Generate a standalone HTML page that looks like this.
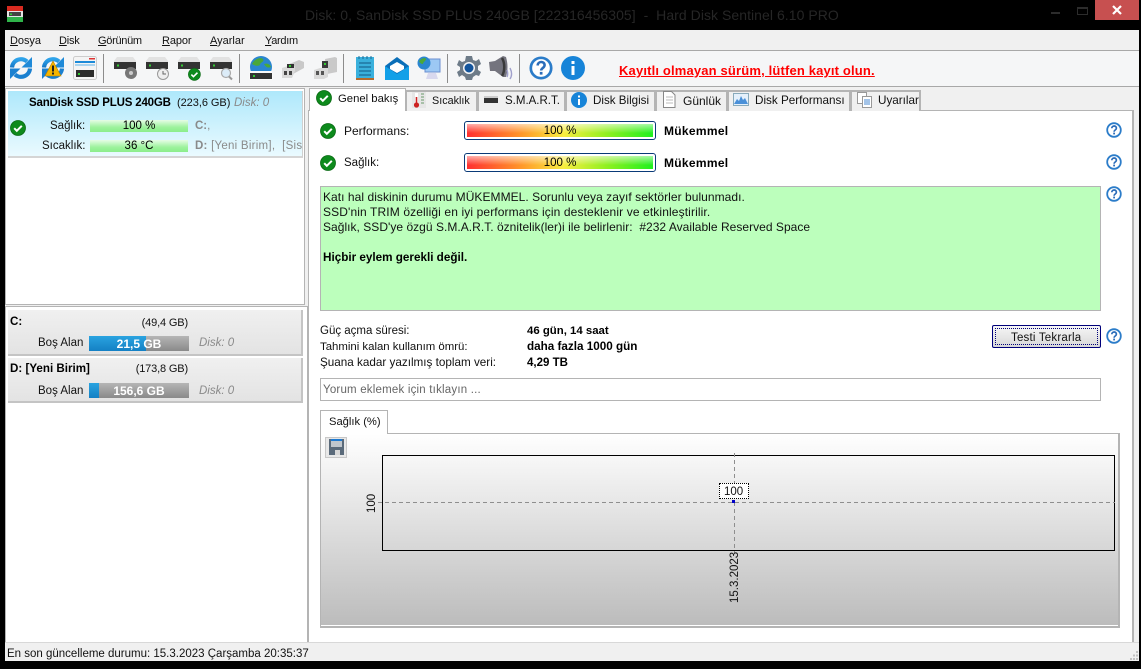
<!DOCTYPE html>
<html><head><meta charset="utf-8"><style>
html,body{margin:0;padding:0;background:#000;}
#p{position:relative;width:1141px;height:669px;overflow:hidden;background:#000;font:11.5px/14px "Liberation Sans",sans-serif;color:#111}
#p div,#p span,#p svg{position:absolute}
.t{white-space:nowrap}
.b{font-weight:bold;color:#000;font-size:11.6px}
.g{color:#8a8a8a}
.r{text-align:right}
.tab{background:#f0f0f0;border:2px solid #b4b4b4;border-bottom:0;box-sizing:border-box;top:90px;height:21px}
.sep{width:1px;height:29px;top:54px;background:#8c8c8c}
.bar{height:12px;background:linear-gradient(#e6fde6,#9df29d 60%,#8bee8b);text-align:center;line-height:12px;left:90px;width:98px;color:#000}
.card{left:8px;width:295px;background:linear-gradient(#f0f0f0,#e3e3e3);border-right:2px solid #c4c4c4;border-bottom:2px solid #c4c4c4;box-sizing:border-box}
.free{left:89px;width:100px;height:15px;background:linear-gradient(#b5b5b5,#8a8a8a);color:#fff;font-weight:bold;text-align:center;line-height:16px;font-size:12px}
.prog{left:464px;width:192px;height:19px;border:1px solid #0a3a78;border-radius:3px;box-sizing:border-box;background:#fff}
.fill{left:2px;right:2px;top:2px;bottom:2px;background:linear-gradient(rgba(255,255,255,.6),rgba(255,255,255,0) 70%),linear-gradient(90deg,#ff3030,#ff9a2a 30%,#f8ee40 52%,#90f020 75%,#20f020);text-align:center;line-height:15px;color:#000}
.n{font-size:11px;letter-spacing:-.3px}
</style></head><body><div id="p">

<svg width="0" height="0" style="left:0;top:0"><defs>
<linearGradient id="bl" x1="0" y1="0" x2="0" y2="1"><stop offset="0" stop-color="#2ea3ea"/><stop offset="1" stop-color="#1576c6"/></linearGradient>
<g id="ok"><circle cx="8" cy="8" r="7.5" fill="#0d8a1c" stroke="#0a6a14" stroke-width=".8"/><path d="M4.2 8.200l2.600 2.600 5-5" fill="none" stroke="#fff" stroke-width="2"/></g>
<g id="help"><circle cx="8" cy="8" r="6.800" fill="#fff" stroke="#2b7cc9" stroke-width="1.800"/><path d="M5.800 6.300c0-3 4.600-3 4.600-.2 0 1.900-2.300 1.900-2.300 3.600" fill="none" stroke="#2b6cb9" stroke-width="1.700"/><rect x="7.200" y="10.600" width="1.800" height="1.800" fill="#2b6cb9"/></g>
<g id="sync"><path d="M3 11.500A9 9 0 0 1 18 5.500" fill="none" stroke="url(#bl)" stroke-width="4.200"/><path d="M23 1v10.500H12.500z" fill="#1f8ad8"/><path d="M21 12.500A9 9 0 0 1 6 18.500" fill="none" stroke="#1a80d0" stroke-width="4.200"/><path d="M1 23V12.500H11.500z" fill="#1a80d0"/></g>
<g id="hdd"><path d="M3 0h16l3 4v8H0V4z" fill="#e2e2e2"/><rect x="0" y="5" width="22" height="7" fill="#333"/><rect x="3" y="7.500" width="2" height="2" fill="#3c3"/></g>
</defs></svg>

<!-- title bar -->
<svg style="left:7px;top:6px" width="16" height="16"><rect width="16" height="6" fill="#d92a20"/><rect y="10" width="16" height="6" fill="#2fb34a"/><rect y="5" width="16" height="6" fill="#e4e4e4"/><rect x="2" y="6" width="12" height="4" fill="#444"/><rect x="3" y="7.500" width="2" height="1.500" fill="#3c3"/></svg>
<span class="t" style="left:305px;top:6px;font-size:14px;line-height:18px;color:#262626;letter-spacing:.05px">Disk: 0, SanDisk SSD PLUS 240GB [222316456305]&nbsp; -&nbsp; Hard Disk Sentinel 6.10 PRO</span>
<div style="left:1051px;top:12px;width:9px;height:2px;background:#2c2c2c"></div>
<div style="left:1077px;top:7px;width:9px;height:5px;border:1px solid #2c2c2c;border-top-width:2px"></div>
<div style="left:1095px;top:0;width:44px;height:20px;background:#c75050"></div>
<svg style="left:1111px;top:5px" width="12" height="10"><path d="M2 1l8 8M10 1l-8 8" stroke="#fff" stroke-width="2.200"/></svg>

<!-- window -->
<div style="left:5px;top:30px;width:1134px;height:631px;background:#fff"></div>
<div style="left:5px;top:30px;width:1134px;height:20px;background:#f0f0f0"></div>
<div style="left:5px;top:50px;width:1134px;height:1px;background:#a8a8a8"></div>
<div style="left:5px;top:51px;width:1134px;height:35px;background:#f5f6f7"></div>
<div style="left:5px;top:86px;width:1134px;height:1px;background:#a8a8a8"></div>
<div style="left:5px;top:87px;width:1134px;height:555px;background:#f0f0f0"></div>
<div style="left:5px;top:642px;width:1134px;height:1px;background:#d8d8d8"></div>
<div style="left:5px;top:643px;width:1134px;height:18px;background:#f0f0f0"></div>

<!-- menu -->
<span class="t" style="left:10px;top:34px;font-size:11px;letter-spacing:-.05px"><u>D</u>osya</span>
<span class="t" style="left:59px;top:34px;font-size:11px;letter-spacing:-.2px"><u>D</u>isk</span>
<span class="t" style="left:98px;top:34px;font-size:11px;letter-spacing:-.3px"><u>G</u>örünüm</span>
<span class="t" style="left:162px;top:34px;font-size:11px;letter-spacing:-.1px"><u>R</u>apor</span>
<span class="t" style="left:210px;top:34px;font-size:11px"><u>A</u>yarlar</span>
<span class="t" style="left:265px;top:34px;font-size:11px;letter-spacing:-.3px"><u>Y</u>ardım</span>

<!-- toolbar -->
<svg style="left:9px;top:56px" width="24" height="24"><use href="#sync"/></svg>
<svg style="left:41px;top:56px" width="24" height="24"><use href="#sync"/><path d="M12 5l8 15H4z" fill="#f6b500" stroke="#b77f00" stroke-width=".6"/><rect x="11" y="9.500" width="2" height="6" fill="#222"/><rect x="11" y="16.500" width="2" height="2" fill="#222"/></svg>
<svg style="left:73px;top:56px" width="24" height="24"><rect x=".5" y=".5" width="23" height="23" rx="2" fill="#f4f4f4" stroke="#ccc"/><rect x="2" y="5" width="20" height="2" fill="#1c8ad8"/><rect x="2" y="8" width="20" height="2" fill="#aad4ef"/><rect x="3" y="14" width="18" height="7" fill="#2c2c2c"/><rect x="5" y="17" width="2" height="2" fill="#3c3"/><rect x="16" y="2" width="6" height="1.500" fill="#d33"/></svg>
<div class="sep" style="left:103px"></div>
<svg style="left:114px;top:57px" width="24" height="24"><use href="#hdd"/><circle cx="17" cy="16" r="6" fill="#777"/><circle cx="17" cy="16" r="2" fill="#ccc"/></svg>
<svg style="left:146px;top:57px" width="24" height="24"><use href="#hdd"/><circle cx="17" cy="17" r="5.500" fill="#eee" stroke="#999"/><path d="M17 14v3h3" fill="none" stroke="#666"/></svg>
<svg style="left:178px;top:57px" width="24" height="24"><use href="#hdd"/><use href="#ok" transform="translate(10 11) scale(.8)"/></svg>
<svg style="left:210px;top:57px" width="24" height="24"><use href="#hdd"/><circle cx="16" cy="16" r="4.500" fill="#dcecf8" stroke="#aaa" stroke-width="1.200"/><path d="M19 19.500l3 3" stroke="#999" stroke-width="2"/></svg>
<div class="sep" style="left:239px"></div>
<svg style="left:249px;top:56px" width="24" height="25"><circle cx="12" cy="11" r="11" fill="#2a86d0"/><path d="M3 8c3-6 9-7 11-5 2 3-3 3-3 6-3 2-6 0-8-1zM15 8c3-1 6 0 7 3-2 1-5 1-7-3z" fill="#4aa83a"/><path d="M1 15h22l1 7q0 2-2 2H2q-2 0-2-2z" fill="#fafafa"/><rect x="1" y="17" width="22" height="6" fill="#333"/><rect x="4" y="19" width="2" height="2" fill="#3c3"/></svg>
<svg style="left:281px;top:58px" width="24" height="22"><path d="M6 7L18 2l5 2v6L12 16H6z" fill="#c9c9c9"/><path d="M1 10l6-2h7v5l-3 7H1z" fill="#d9d9d9"/><rect x="6" y="6" width="7" height="4" fill="#333"/><rect x="8" y="7" width="2" height="2" fill="#3c3"/><path d="M3 13h3v4H3zm5 0h3v4H8z" fill="#444"/></svg>
<svg style="left:313px;top:57px" width="24" height="23"><path d="M12 2l10-2 2 1v14l-10 2z" fill="#c9c9c9"/><rect x="9" y="4" width="6" height="9" fill="#3a3a3a"/><rect x="11" y="6" width="2" height="2" fill="#3c3"/><path d="M1 13l6-2h8v9l-4 2H1z" fill="#d9d9d9"/><path d="M3 14h3v4H3zm5 0h3v4H8z" fill="#555"/></svg>
<div class="sep" style="left:343px"></div>
<svg style="left:355px;top:56px" width="20" height="24"><rect x="1" y="1" width="18" height="21" fill="#3ab0dc"/><rect x="1" y="22" width="18" height="2" fill="#b56a2c"/><path d="M4 7h12M4 11h12M4 15h12M4 19h12" stroke="#1a6a96" stroke-width="1.300"/><path d="M4 0v3M8 0v3M12 0v3M16 0v3" stroke="#1a6a96"/></svg>
<svg style="left:385px;top:57px" width="24" height="23"><path d="M0 9L12 0l12 9v14H0z" fill="#0b6fb8"/><path d="M5 9l7-4 7 4v3l-7 4-7-4z" fill="#fff"/><path d="M0 9l12 8 12-8v14H0z" fill="#12a0e8"/></svg>
<svg style="left:417px;top:56px" width="24" height="24"><rect x="8" y="3" width="15" height="13" fill="#9cc8f4" stroke="#6a8fd0"/><circle cx="7" cy="7" r="6.500" fill="#2a86d0"/><path d="M2 5c3-3 6-4 7-2 0 2-3 3-3 5-2 0-3-1-4-3z" fill="#4aa83a"/><path d="M11 17h8l2 6H9z" fill="#d8d8ee"/></svg>
<div class="sep" style="left:447px"></div>
<svg style="left:457px;top:56px" width="24" height="24"><path d="M9 0h6l1 4 3 1 3-2 2 5-3 2v4l3 2-2 4-3-1-3 2-1 3H9l-1-3-3-2-3 2-2-5 3-2v-3l-3-2 2-5 3 2 3-1z" fill="#6d7b88"/><circle cx="12" cy="12" r="6" fill="#f5f6f7"/><circle cx="12" cy="12" r="4.500" fill="#14559c"/></svg>
<svg style="left:488px;top:56px" width="26" height="24"><path d="M1 6l6-1 8-5 3 1c2 7 2 13 0 20h-3l-8-6H2z" fill="#74747e"/><path d="M14 2c3 5 3 13 0 18" stroke="#3a3a3a" stroke-width="2.500" fill="none"/><path d="M19 14c1 3 1 5 0 7M22 12c2 4 2 8 0 11" stroke="#a0a0cc" stroke-width="1.400" fill="none"/></svg>
<div class="sep" style="left:519px"></div>
<svg style="left:529px;top:56px" width="24" height="24" viewBox="0 0 16 16"><use href="#help"/></svg>
<svg style="left:561px;top:56px" width="24" height="24"><circle cx="12" cy="12" r="12" fill="#1784d8"/><rect x="10.500" y="10" width="3" height="9" fill="#fff"/><rect x="10.500" y="5" width="3" height="3" fill="#fff"/></svg>
<span class="t" style="left:619px;top:64px;font-weight:bold;font-size:13px;color:#f00;text-decoration:underline;letter-spacing:.16px">Kayıtlı olmayan sürüm, lütfen kayıt olun.</span>

<!-- left top panel -->
<div style="left:5px;top:88px;width:300px;height:217px;background:#fff;border:1px solid #b4b4b4;box-sizing:border-box"></div>
<div style="left:8px;top:91px;width:295px;height:67px;background:linear-gradient(#aee8fb,#eafaff);border-right:1px solid #d0d0d0;border-bottom:2px solid #d5d5d5;box-sizing:border-box"></div>
<span class="t b" style="left:29px;top:96px;font-size:11.5px;letter-spacing:-.18px">SanDisk SSD PLUS 240GB</span>
<span class="t n" style="left:177px;top:96px;letter-spacing:-.05px">(223,6 GB)</span>
<span class="t g" style="left:234px;top:96px;font-style:italic">Disk: 0</span>
<svg style="left:10px;top:120px" width="16" height="16"><use href="#ok"/></svg>
<span class="t" style="left:50px;top:119px">Sağlık:</span>
<div class="bar" style="top:120px">100 %</div>
<span class="t" style="left:42px;top:139px">Sıcaklık:</span>
<div class="bar" style="top:140px">36 °C</div>
<span class="t g" style="left:195px;top:119px"><b>C:</b>,</span>
<div style="left:195px;top:138px;width:107px;height:16px;overflow:hidden"><span class="t g" style="left:0;top:1px;letter-spacing:.25px"><b>D:</b> [Yeni Birim],&nbsp; [Sistem]</span></div>

<!-- left bottom panel -->
<div style="left:5px;top:306px;width:303px;height:336px;background:#fff;border:1px solid #b4b4b4;border-bottom:0;box-sizing:border-box"></div>
<div class="card" style="top:310px;height:46px"></div>
<span class="t b" style="left:10px;top:315px">C:</span>
<span class="t r n" style="right:953px;top:316px;letter-spacing:-.15px">(49,4 GB)</span>
<span class="t" style="left:38px;top:336px">Boş Alan</span>
<div class="free" style="top:336px"><div style="left:0;top:0;width:57px;height:15px;background:linear-gradient(#2aa3e0,#1480c4)"></div><span style="left:0;right:0;top:0">21,5 GB</span></div>
<span class="t g" style="left:199px;top:336px;font-style:italic">Disk: 0</span>
<div class="card" style="top:358px;height:45px"></div>
<span class="t b" style="left:10px;top:362px">D: [Yeni Birim]</span>
<span class="t r n" style="right:953px;top:362px;letter-spacing:-.15px">(173,8 GB)</span>
<span class="t" style="left:38px;top:384px">Boş Alan</span>
<div class="free" style="top:383px"><div style="left:0;top:0;width:10px;height:15px;background:linear-gradient(#2aa3e0,#1480c4)"></div><span style="left:0;right:0;top:0">156,6 GB</span></div>
<span class="t g" style="left:199px;top:384px;font-style:italic">Disk: 0</span>

<!-- tab sheet -->
<div style="left:308px;top:110px;width:826px;height:532px;background:#fff;border:1px solid #b4b4b4;box-sizing:border-box;border-width:1px 2px 0 1px"></div>
<div class="tab" style="left:405px;width:73px"></div>
<div class="tab" style="left:477px;width:89px"></div>
<div class="tab" style="left:565px;width:91px"></div>
<div class="tab" style="left:655px;width:73px"></div>
<div class="tab" style="left:727px;width:124px"></div>
<div class="tab" style="left:850px;width:71px"></div>
<div style="left:309px;top:88px;width:97px;height:23px;background:#fff;border:1px solid #b4b4b4;border-bottom:0;box-sizing:border-box"></div>
<svg style="left:316px;top:90px" width="16" height="16"><use href="#ok"/></svg>
<span class="t" style="left:338px;top:92px;font-size:11.3px">Genel bakış</span>
<svg style="left:411px;top:92px" width="16" height="16"><rect x="1" y="0" width="14" height="16" fill="#e6e6e6"/><rect x="4" y="1" width="3" height="11" fill="#fff"/><rect x="4.700" y="5" width="1.600" height="7" fill="#c22"/><circle cx="5.500" cy="13" r="2.600" fill="#c22"/><path d="M10 2h3M10 5h3M10 8h3M10 11h3" stroke="#6a9a6a"/></svg>
<span class="t" style="left:432px;top:94px;font-size:10.8px">Sıcaklık</span>
<svg style="left:484px;top:96px" width="16" height="8"><rect width="14" height="5" y="2" fill="#333"/><rect y="0" width="14" height="2" fill="#ccc"/></svg>
<span class="t" style="left:505px;top:94px">S.M.A.R.T.</span>
<svg style="left:571px;top:92px" width="16" height="16"><circle cx="8" cy="8" r="8" fill="#1784d8"/><rect x="7" y="7" width="2" height="6" fill="#fff"/><rect x="7" y="3.500" width="2" height="2" fill="#fff"/></svg>
<span class="t" style="left:593px;top:94px;font-size:11.6px">Disk Bilgisi</span>
<svg style="left:662px;top:91px" width="14" height="17"><path d="M1.500.5h8l3.500 3.500v12.500h-11.500z" fill="#fff" stroke="#888"/><path d="M4 6h7M4 9h7M4 12h7" stroke="#bbb"/></svg>
<span class="t" style="left:683px;top:94px;font-size:12px">Günlük</span>
<svg style="left:733px;top:93px" width="16" height="13"><rect x=".5" y=".5" width="15" height="12" fill="#e4f0fb" stroke="#8ab"/><path d="M1 11l3-5 2 2 2-5 2 4 2-2 3 6z" fill="#4a90d8"/></svg>
<span class="t" style="left:755px;top:94px;font-size:11.7px">Disk Performansı</span>
<svg style="left:857px;top:92px" width="15" height="16"><rect x=".5" y=".5" width="9" height="11" fill="#fff" stroke="#999"/><rect x="5.500" y="4.500" width="9" height="11" fill="#fff" stroke="#999"/><path d="M7 8h6M7 10h6M7 12h6" stroke="#4a8ad0"/></svg>
<span class="t" style="left:878px;top:94px;font-size:11.7px">Uyarılar</span>

<!-- overview -->
<svg style="left:320px;top:123px" width="16" height="16"><use href="#ok"/></svg>
<span class="t" style="left:344px;top:124px;font-size:12px">Performans:</span>
<div class="prog" style="top:121px"><div class="fill">100 %</div></div>
<span class="t b" style="left:664px;top:124px;font-size:12px;letter-spacing:.3px">Mükemmel</span>
<svg style="left:320px;top:155px" width="16" height="16"><use href="#ok"/></svg>
<span class="t" style="left:344px;top:156px">Sağlık:</span>
<div class="prog" style="top:153px"><div class="fill">100 %</div></div>
<span class="t b" style="left:664px;top:156px;font-size:12px;letter-spacing:.3px">Mükemmel</span>
<svg style="left:1106px;top:122px" width="16" height="16"><use href="#help"/></svg>
<svg style="left:1106px;top:154px" width="16" height="16"><use href="#help"/></svg>
<svg style="left:1106px;top:186px" width="16" height="16"><use href="#help"/></svg>
<svg style="left:1106px;top:328px" width="16" height="16"><use href="#help"/></svg>

<div style="left:320px;top:186px;width:781px;height:125px;background:#bcffbc;border:1px solid #b4b4b4;box-sizing:border-box"></div>
<span class="t" style="left:323px;top:190px;font-size:12px;letter-spacing:.05px">Katı hal diskinin durumu MÜKEMMEL. Sorunlu veya zayıf sektörler bulunmadı.</span>
<span class="t" style="left:323px;top:205px;font-size:12px;letter-spacing:.12px">SSD'nin TRIM özelliği en iyi performans için desteklenir ve etkinleştirilir.</span>
<span class="t" style="left:323px;top:220px;font-size:12px;letter-spacing:.03px">Sağlık, SSD'ye özgü S.M.A.R.T. öznitelik(ler)i ile belirlenir:&nbsp; #232 Available Reserved Space</span>
<span class="t b" style="left:323px;top:251px;font-size:11.7px">Hiçbir eylem gerekli değil.</span>

<span class="t" style="left:320px;top:324px">Güç açma süresi:</span>
<span class="t" style="left:320px;top:340px;font-size:11.4px">Tahmini kalan kullanım ömrü:</span>
<span class="t" style="left:320px;top:356px;font-size:11.7px">Şuana kadar yazılmış toplam veri:</span>
<span class="t b" style="left:527px;top:324px;font-size:11.4px">46 gün, 14 saat</span>
<span class="t b" style="left:527px;top:340px;font-size:11.7px">daha fazla 1000 gün</span>
<span class="t b" style="left:527px;top:356px;font-size:11.5px">4,29 TB</span>

<div style="left:992px;top:325px;width:109px;height:23px;background:linear-gradient(#f6f6f6,#d8d8d8);border:1px solid #00007a;border-radius:2px;box-sizing:border-box"><div style="left:2px;top:2px;right:2px;bottom:2px;border:1px dotted #00007a"></div></div>
<span class="t" style="left:1011px;top:331px;letter-spacing:.2px">Testi Tekrarla</span>

<div style="left:320px;top:378px;width:781px;height:23px;background:#fff;border:1px solid #b4b4b4;box-sizing:border-box"></div>
<span class="t" style="left:323px;top:383px;color:#666;letter-spacing:.2px">Yorum eklemek için tıklayın ...</span>

<!-- chart -->
<div style="left:320px;top:433px;width:800px;height:195px;background:#fff;border:1px solid #b4b4b4;box-sizing:border-box;border-width:1px 2px 2px 1px"></div>
<div style="left:321px;top:434px;width:797px;height:191px;background:linear-gradient(#fff,#bcbcbc)"></div>
<div style="left:320px;top:410px;width:68px;height:24px;background:#fff;border:1px solid #b4b4b4;border-bottom:0;box-sizing:border-box"></div>
<span class="t" style="left:329px;top:415px;font-size:11.2px">Sağlık (%)</span>
<div style="left:325px;top:437px;width:22px;height:21px;background:#e8e8e8;border:1px solid #c8c8c8;box-sizing:border-box"></div>
<svg style="left:329px;top:439px" width="15" height="17"><rect width="15" height="16" fill="#5a6a7a"/><rect x="2" y="0" width="11" height="2" fill="#1f7ad0"/><rect x="2" y="2" width="11" height="6" fill="#c0c6cc"/><rect x="4" y="11" width="7" height="5" fill="#d8d8d8"/><rect x="4" y="11" width="2" height="5" fill="#5a6a7a"/></svg>
<div style="left:382px;top:455px;width:733px;height:96px;border:1px solid #000;box-sizing:border-box"></div>
<svg style="left:375px;top:453px" width="745" height="110"><path d="M3 49.500H740" stroke="#8e8e8e" stroke-dasharray="4 3"/><path d="M359.500 0V100" stroke="#8e8e8e" stroke-dasharray="4 3"/></svg>
<div style="left:719px;top:483px;width:30px;height:16px;background:#fff;border:1px dotted #000;box-sizing:border-box"></div>
<span class="t" style="left:724px;top:485px">100</span>
<div style="left:732px;top:500px;width:3px;height:3px;background:#0000c8"></div>
<span class="t" style="left:361px;top:495px;transform:rotate(-90deg);transform-origin:11px 7px">100</span>
<span class="t" style="left:710px;top:571px;width:50px;text-align:center;transform:rotate(-90deg)">15.3.2023</span>

<!-- status -->
<span class="t" style="left:7px;top:647px;font-size:11.5px">En son güncelleme durumu: 15.3.2023 Çarşamba 20:35:37</span>
<svg style="left:1129px;top:651px" width="10" height="10"><path d="M7 0h2v2H7zM4 3.500h2v2H4zM7 3.500h2v2H7zM1 7h2v2H1zM4 7h2v2H4zM7 7h2v2H7z" fill="#c0c0c0"/></svg>
</div></body></html>
